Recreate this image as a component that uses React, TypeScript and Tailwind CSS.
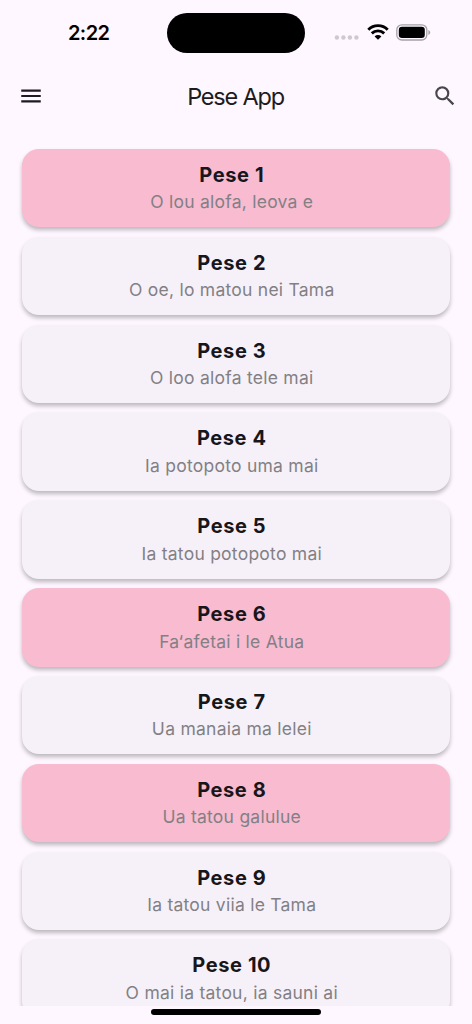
interface Song {
  number: number
  title: string
  favorite?: boolean
}

const songs: Song[] = [
  { number: 1, title: 'O lou alofa, leova e', favorite: true },
  { number: 2, title: 'O oe, lo matou nei Tama' },
  { number: 3, title: 'O loo alofa tele mai' },
  { number: 4, title: 'Ia potopoto uma mai' },
  { number: 5, title: 'Ia tatou potopoto mai' },
  { number: 6, title: 'Fa‘afetai i le Atua', favorite: true },
  { number: 7, title: 'Ua manaia ma lelei' },
  { number: 8, title: 'Ua tatou galulue', favorite: true },
  { number: 9, title: 'Ia tatou viia le Tama' },
  { number: 10, title: 'O mai ia tatou, ia sauni ai' },
]

function StatusBar() {
  return (
    <div className="flex h-[66px] shrink-0 items-start pt-[12.5px]">
      <div className="flex h-10 w-[167px] items-center pl-[68px] text-[20px] font-semibold tracking-[-0.6px] text-black">2:22</div>
      <div className="h-[40.5px] w-[138px] rounded-full bg-black" />
      <div className="flex h-10 items-center pl-[29px]">
        <svg className="mt-[10px]" width="25" height="5" viewBox="0 0 25 5" fill="#cfc8d1">
          <circle cx="2.9" cy="2.5" r="2.2" />
          <circle cx="9.4" cy="2.5" r="2.2" />
          <circle cx="15.9" cy="2.5" r="2.2" />
          <circle cx="22.4" cy="2.5" r="2.2" />
        </svg>
        <svg className="mb-[2px] ml-[7.5px]" width="22" height="16" viewBox="0 0 22 16" fill="none" stroke="black" strokeWidth="2.9">
          <path d="M1.3 5.7a13.7 13.7 0 0 1 19.4 0" />
          <path d="M4.8 9.4a8.8 8.8 0 0 1 12.4 0" />
          <path d="M11 15.8 7.6 12.4a4.8 4.8 0 0 1 6.8 0Z" fill="black" stroke="none" />
        </svg>
        <svg className="mb-px ml-[7.5px]" width="36" height="17" viewBox="0 0 36 17">
          <rect x="0.8" y="0.8" width="30" height="15.2" rx="5" fill="none" stroke="#a5a0a8" strokeWidth="1.3" />
          <rect x="2.8" y="2.8" width="26" height="11.2" rx="3.2" fill="black" />
          <path d="M32.4 6v5c1.1-.4 1.8-1.4 1.8-2.5S33.5 6.4 32.4 6Z" fill="#a5a0a8" />
        </svg>
      </div>
    </div>
  )
}

function AppBar() {
  return (
    <header className="flex h-[60px] shrink-0 items-center justify-between pr-[14px] pl-[18px]">
      <button type="button" aria-label="Menu">
        <svg width="26" height="26" viewBox="0 0 24 24" fill="#1d1b20">
          <path d="M3 18h18v-2H3v2zm0-5h18v-2H3v2zm0-7v2h18V6H3z" />
        </svg>
      </button>
      <h1 className="pt-px pr-[5px] text-[23.5px] tracking-[-1.2px] text-[#1d1b20]">Pese App</h1>
      <button type="button" aria-label="Search">
        <svg width="26" height="26" viewBox="0 0 24 24" fill="#49454f">
          <path d="M15.5 14h-.79l-.28-.27A6.471 6.471 0 0 0 16 9.5 6.5 6.5 0 1 0 9.5 16c1.61 0 3.09-.59 4.23-1.57l.27.28v.79l5 4.99L20.49 19l-4.99-5zm-6 0C7.01 14 5 11.99 5 9.5S7.01 5 9.5 5 14 7.01 14 9.5 11.99 14 9.5 14z" />
        </svg>
      </button>
    </header>
  )
}

function SongCard({ number, title, favorite }: Song) {
  return (
    <li
      className={`h-[78.5px] shrink-0 rounded-[17px] pt-3 pr-[8.5px] text-center shadow-[0_3px_4px_rgba(0,0,0,0.26)] ${
        favorite ? 'bg-[#f8bbd0]' : 'bg-[#f6f1f9]'
      }`}
    >
      <div className="text-[20px] leading-[28.5px] font-bold tracking-[0.6px] text-[#17161a]">Pese {number}</div>
      <div className="text-[17.5px] leading-[25px] tracking-[0.25px] text-[#828084]">{title}</div>
    </li>
  )
}

export default function App() {
  return (
    <div className="flex h-[1024px] w-[472px] flex-col overflow-hidden bg-[#fef7ff] font-['Inter',sans-serif]">
      <StatusBar />
      <AppBar />
      <ul className="flex h-[880px] shrink-0 flex-col gap-[9.35px] overflow-hidden px-[22px] pt-[22.9px]">
        {songs.map((song) => (
          <SongCard key={song.number} {...song} />
        ))}
      </ul>
      <div className="mx-auto mt-[3px] h-[6px] w-[170px] rounded-full bg-black" />
    </div>
  )
}
